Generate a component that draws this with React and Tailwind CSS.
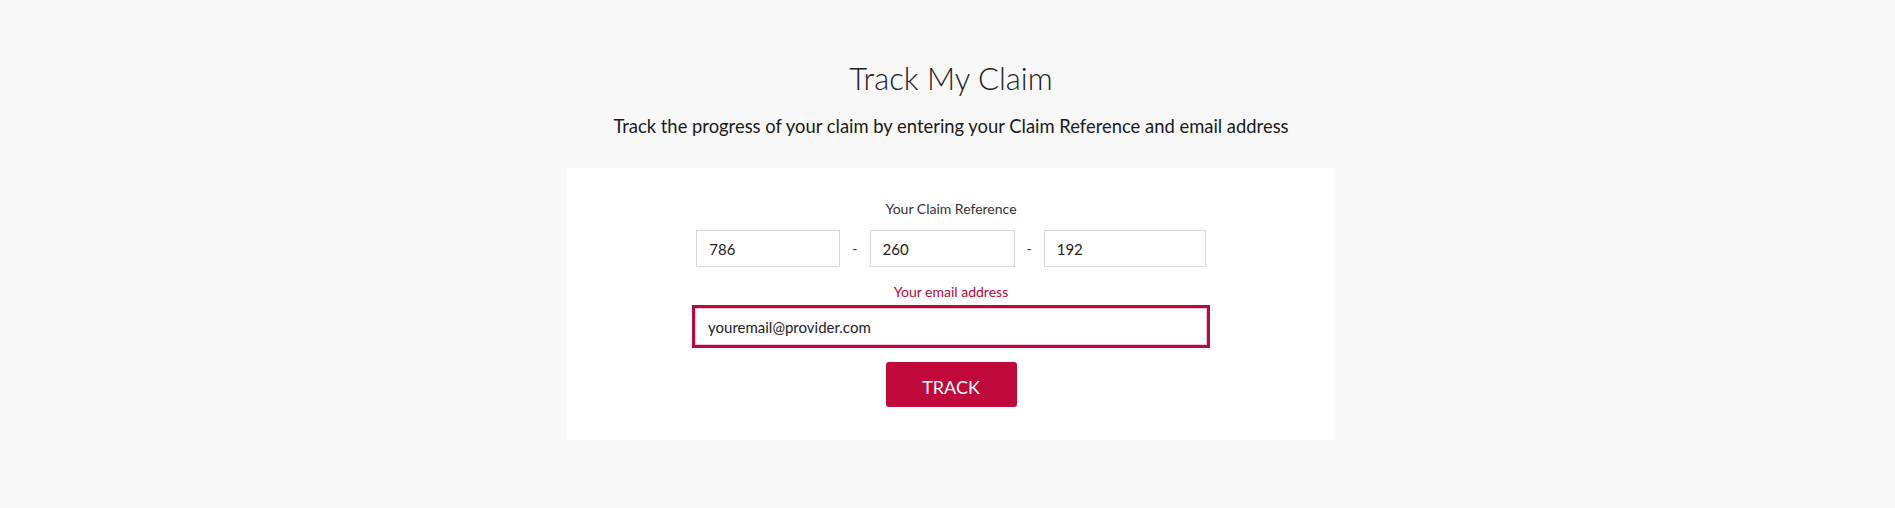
import React from 'react';

const App = () => {
  return (
    <div className="min-h-[508px] bg-[#f8f8f8] flex flex-col items-center pt-[58px] pl-[7px] font-['Lato',sans-serif] text-[#222]">
      <h1 className="text-[31px] leading-[40px] font-light text-[#222]">Track My Claim</h1>
      <p className="mt-[16px] text-[18.4px] leading-[24px] text-[#1a1a1a]">
        Track the progress of your claim by entering your Claim Reference and email address
      </p>

      <div className="mt-[30px] w-[768px] bg-white flex flex-col items-center pt-[31px] pb-[33px]">
        <label className="text-[14px] leading-[20px] text-[#333]">Your Claim Reference</label>
        <div className="mt-[11px] flex items-center gap-[12px]">
          <input
            defaultValue="786"
            className="w-[144px] h-[37px] border border-[#d9d9d9] px-[12px] text-[15px] text-[#222] outline-none"
          />
          <span className="text-[14px] text-[#333]">-</span>
          <input
            defaultValue="260"
            className="w-[145px] h-[37px] border border-[#d9d9d9] px-[12px] text-[15px] text-[#222] outline-none"
          />
          <span className="text-[14px] text-[#333]">-</span>
          <input
            defaultValue="192"
            className="w-[162px] h-[37px] border border-[#d9d9d9] px-[12px] text-[15px] text-[#222] outline-none"
          />
        </div>

        <label className="mt-[15px] text-[14px] leading-[20px] text-[#b5063a]">Your email address</label>
        <input
          defaultValue="youremail@provider.com"
          className="mt-[3px] w-[518px] h-[43px] border-[3px] border-[#b80a3c] px-[13px] text-[15px] text-[#222] outline-none shadow-[inset_0_0_0_1px_#f3c6d2]"
        />

        <button className="mt-[14px] w-[131px] h-[45px] pt-[4px] rounded-[3px] bg-[#c1083b] text-white text-[18px] leading-none">
          TRACK
        </button>
      </div>
    </div>
  );
};

export default App;
